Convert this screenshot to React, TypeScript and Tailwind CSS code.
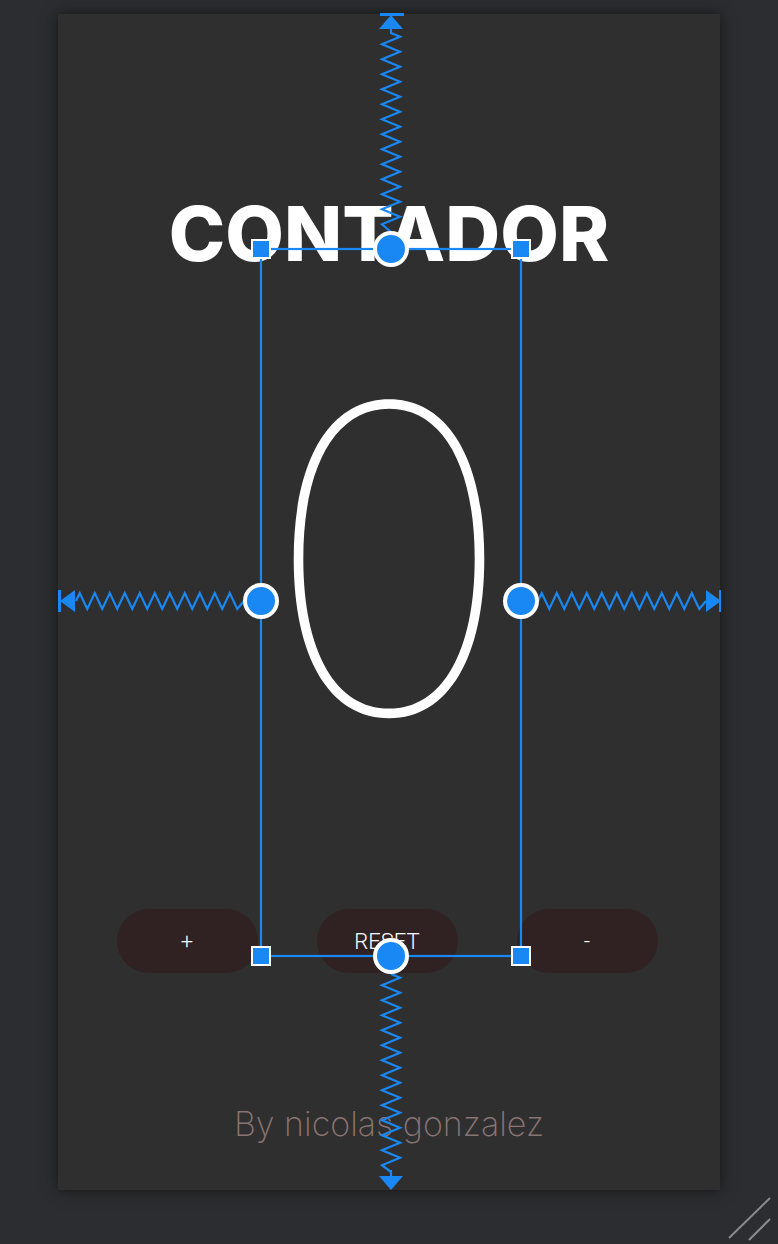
import React from "react";

const BLUE = "#1a88f4";

const zigV = (x: number, y0: number, y1: number, amp = 9, step = 7.5) => {
  const pts: string[] = [`${x},${y0}`];
  let y = y0 + step / 2;
  let side = 1;
  while (y < y1 - step / 2) {
    pts.push(`${x + side * amp},${y}`);
    side = -side;
    y += step;
  }
  pts.push(`${x},${y1}`);
  return pts.join(" ");
};

const zigH = (y: number, x0: number, x1: number, amp = 8, step = 7.5) => {
  const pts: string[] = [`${x0},${y}`];
  let x = x0 + step / 2;
  let side = -1;
  while (x < x1 - step / 2) {
    pts.push(`${x},${y + side * amp}`);
    side = -side;
    x += step;
  }
  pts.push(`${x1},${y}`);
  return pts.join(" ");
};

// layout inspector overlay drawn on top of the panel
const Overlay = () => (
  <svg
    className="absolute left-0 top-0 pointer-events-none"
    width={778}
    height={1244}
    viewBox="0 0 778 1244"
  >
    <g fill="none" stroke={BLUE} strokeWidth={2.2} strokeLinejoin="miter">
      <polyline points={zigV(391, 33, 232)} />
      <polyline points={zigV(391, 974, 1172)} />
      <polyline points={zigH(601, 76, 244)} />
      <polyline points={zigH(601, 538, 706)} />
      <line x1={391} y1={28} x2={391} y2={34} />
      <line x1={391} y1={1170} x2={391} y2={1178} />
      <rect x={261} y={249} width={260} height={707} />
    </g>
    <g fill={BLUE}>
      <rect x={380} y={13} width={24} height={3} />
      <polygon points="391,15 379,29 403,29" />
      <polygon points="391,1190 379,1176 403,1176" />
      <rect x={58} y={590} width={3} height={22} />
      <polygon points="60,601 75,590 75,612" />
      <rect x={719} y={590} width={2} height={22} />
      <polygon points="721,601 706,590 706,612" />
    </g>
    <g fill={BLUE} stroke="#fff" strokeWidth={2}>
      <rect x={252} y={240} width={18} height={18} />
      <rect x={512} y={240} width={18} height={18} />
      <rect x={252} y={947} width={18} height={18} />
      <rect x={512} y={947} width={18} height={18} />
    </g>
    <g fill={BLUE} stroke="#fff" strokeWidth={4}>
      <circle cx={391} cy={249} r={16} />
      <circle cx={261} cy={601} r={16} />
      <circle cx={521} cy={601} r={16} />
      <circle cx={391} cy={956} r={16} />
    </g>
    <g stroke="#8a8b8d" strokeWidth={2}>
      <line x1={729} y1={1238} x2={770} y2={1198} />
      <line x1={749} y1={1240} x2={770} y2={1219} />
    </g>
  </svg>
);

const Btn = ({ label }: { label: string }) => (
  <button className="w-[141px] h-16 rounded-full bg-[#302222] text-white text-[22px] font-light font-['Roboto',sans-serif]">
    {label}
  </button>
);

export default function App() {
  return (
    <main className="relative w-[778px] h-[1244px] bg-[#2c2d30] overflow-hidden">
      <section className="absolute left-[58px] top-[14px] w-[662px] h-[1176px] bg-[#2f2f2f] shadow-[0_0_14px_rgba(0,0,0,0.55)] flex flex-col items-center">
        <h1 className="mt-[181px] text-[76px] leading-none font-extrabold text-white font-['Inter',sans-serif]">
          CONTADOR
        </h1>
        <p className="mt-[74px] text-[427px] leading-none font-thin text-white font-['Inter',sans-serif]">
          0
        </p>
        <section className="mt-[137px] flex gap-[59px] -translate-x-[2px]">
          <Btn label="+" />
          <Btn label="RESET" />
          <Btn label="-" />
        </section>
        <p className="mt-[125px] text-[34px] font-extralight text-[#887474] font-['Inter',sans-serif]">
          By nicolas gonzalez
        </p>
      </section>
      <Overlay />
    </main>
  );
}
